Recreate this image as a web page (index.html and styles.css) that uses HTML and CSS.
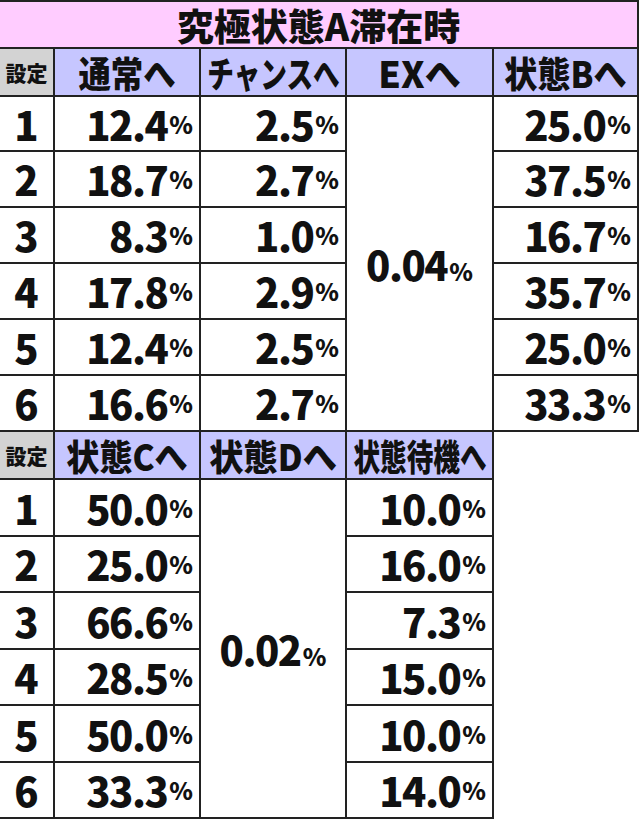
FILE: index.html
```html
<!DOCTYPE html>
<html lang="ja">
<head>
<meta charset="utf-8">
<link rel="stylesheet" href="styles.css">
</head>
<body>
<div class="page">
  <div class="grid grid-a">
    <div class="cell title span-all">究極状態A滞在時</div>

    <div class="cell setting">設定</div>
    <div class="cell head"><span class="sq0">通常へ</span></div>
    <div class="cell head"><span class="sq1">チャンスへ</span></div>
    <div class="cell head"><span>EXへ</span></div>
    <div class="cell head"><span class="sq2">状態Bへ</span></div>

    <div class="cell num">1</div>
    <div class="cell val">12.4<small>%</small></div>
    <div class="cell val">2.5<small>%</small></div>
    <div class="cell val merged"><span>0.04<small>%</small></span></div>
    <div class="cell val">25.0<small>%</small></div>

    <div class="cell num">2</div>
    <div class="cell val">18.7<small>%</small></div>
    <div class="cell val">2.7<small>%</small></div>
    <div class="cell val">37.5<small>%</small></div>

    <div class="cell num">3</div>
    <div class="cell val">8.3<small>%</small></div>
    <div class="cell val">1.0<small>%</small></div>
    <div class="cell val">16.7<small>%</small></div>

    <div class="cell num">4</div>
    <div class="cell val">17.8<small>%</small></div>
    <div class="cell val">2.9<small>%</small></div>
    <div class="cell val">35.7<small>%</small></div>

    <div class="cell num">5</div>
    <div class="cell val">12.4<small>%</small></div>
    <div class="cell val">2.5<small>%</small></div>
    <div class="cell val">25.0<small>%</small></div>

    <div class="cell num">6</div>
    <div class="cell val">16.6<small>%</small></div>
    <div class="cell val">2.7<small>%</small></div>
    <div class="cell val">33.3<small>%</small></div>
  </div>

  <div class="grid grid-b">
    <div class="cell setting">設定</div>
    <div class="cell head"><span class="sq2">状態Cへ</span></div>
    <div class="cell head"><span class="sq3">状態Dへ</span></div>
    <div class="cell head"><span class="sq4">状態待機へ</span></div>

    <div class="cell num">1</div>
    <div class="cell val">50.0<small>%</small></div>
    <div class="cell val merged"><span>0.02<small>%</small></span></div>
    <div class="cell val">10.0<small>%</small></div>

    <div class="cell num">2</div>
    <div class="cell val">25.0<small>%</small></div>
    <div class="cell val">16.0<small>%</small></div>

    <div class="cell num">3</div>
    <div class="cell val">66.6<small>%</small></div>
    <div class="cell val">7.3<small>%</small></div>

    <div class="cell num">4</div>
    <div class="cell val">28.5<small>%</small></div>
    <div class="cell val">15.0<small>%</small></div>

    <div class="cell num">5</div>
    <div class="cell val">50.0<small>%</small></div>
    <div class="cell val">10.0<small>%</small></div>

    <div class="cell num">6</div>
    <div class="cell val">33.3<small>%</small></div>
    <div class="cell val">14.0<small>%</small></div>
  </div>
</div>
</body>
</html>
```

FILE: styles.css
```css
* { box-sizing: border-box; }
html, body {
  margin: 0;
  padding: 0;
  background: #ffffff;
}
body {
  width: 640px;
  height: 820px;
  overflow: hidden;
  font-family: "Noto Sans CJK JP", "Noto Sans", sans-serif;
  font-weight: 900;
  color: #111;
}
.page {
  display: flex;
  flex-direction: column;
  align-items: flex-start;
}
.grid {
  display: grid;
  gap: 2px;
  background: #222;
}
.grid-a {
  width: 639px;
  padding: 2px 2px 2px 0;
  grid-template-columns: 53px 144px 144px 145px 143px;
  grid-template-rows: 45px 46px 53px 54px 54px 54px 54px 54px;
}
.grid-b {
  width: 494px;
  padding: 0 2px 2px 0;
  grid-template-columns: 53px 144px 144px 145px;
  grid-template-rows: 46px 55px 54px 55px 54px 55px 54px;
}
.cell {
  background: #fff;
  display: flex;
  align-items: center;
  white-space: nowrap;
  min-width: 0;
  min-height: 0;
}
.span-all { grid-column: 1 / -1; }
.title {
  background: #ffccff;
  justify-content: center;
  font-size: 37px;
  line-height: 44px;
}
.setting {
  background: #d3d3d3;
  justify-content: center;
  font-size: 21px;
  line-height: 1;
}
.head {
  background: #c6c6ff;
  justify-content: center;
  font-size: 36px;
  line-height: 40px;
}
.head span { display: inline-block; }
.sq0 { transform: scaleX(0.9); }
.sq1 { transform: scaleX(0.74); }
.sq2 { transform: scaleX(0.92); }
.sq3 { transform: scaleX(0.95); }
.sq4 { transform: scaleX(0.74); }
.num {
  justify-content: center;
  font-size: 40px;
  line-height: 1;
}
.val {
  justify-content: flex-end;
  padding-right: 6px;
  font-size: 40px;
  line-height: 1;
  letter-spacing: -1.5px;
}
.val small {
  font-size: 24px;
  margin-left: 2px;
  letter-spacing: 0;
}
.merged {
  justify-content: center;
  padding-right: 0;
}
.grid-a .merged { grid-column: 4; grid-row: 3 / span 6; }
.grid-b .merged { grid-column: 3; grid-row: 2 / span 6; }
```
